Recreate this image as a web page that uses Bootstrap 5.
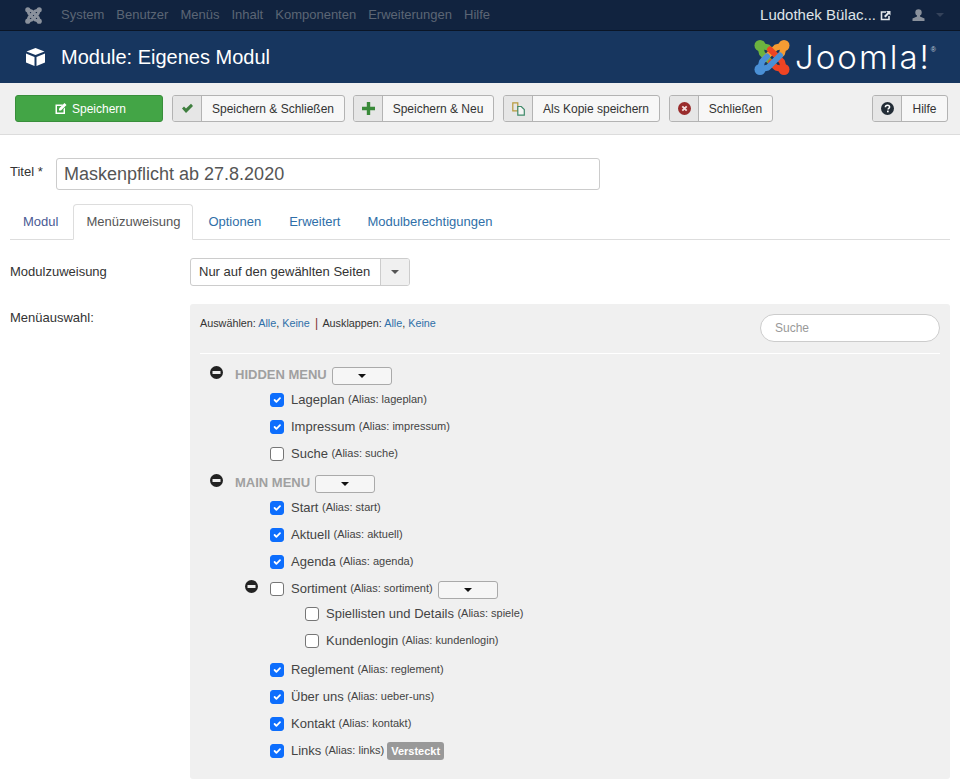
<!DOCTYPE html>
<html lang="de">
<head>
    <meta charset="UTF-8">
    <meta name="viewport" content="width=device-width, initial-scale=1.0">
    <title>Module: Eigenes Modul</title>
    <link href="https://cdn.jsdelivr.net/npm/bootstrap@5.3.0/dist/css/bootstrap.min.css" rel="stylesheet">
    <style>
        body { font-family: "Liberation Sans", Arial, sans-serif; font-size: 13px; color: #333; background: #fff; height: 781px; overflow: hidden; }
        a { text-decoration: none; color: #2f6fa8; }

        /* top bar */
        .topbar { height: 31px; background: #11233f; border-bottom: 1px solid #0a1526; padding: 0 16px 0 25px; }
        .topbar-logo { width: 17px; height: 17px; margin-right: 19px; }
        .topbar-link { color: #5c6675; font-size: 13px; margin-right: 12px; }
        .site-name { color: #dfe3e8; font-size: 15px; }
        .user-icon { margin-left: 21px; margin-right: 11px; }
        .user-caret { width: 0; height: 0; border: 4px solid transparent; border-top-color: #34425a; margin-top: 4px; }

        /* title bar */
        .titlebar { height: 52px; background: #17365f; padding: 0 24px 0 25px; }
        .page-title { color: #fff; font-size: 20px; font-weight: 400; margin: 0 0 0 15px; }
        .brand-word { color: #fff; font-family: "Inter", sans-serif; font-weight: 300; font-size: 33px; line-height: 1; margin-left: 5px; letter-spacing: 2px; }
        .brand-reg { color: #c9d1dc; font-size: 7px; align-self: flex-start; margin-top: 6px; }

        /* toolbar */
        .toolbar { height: 52px; background: #f0f0f0; border-bottom: 1px solid #dcdcdc; padding: 12px 12px 0 15px; }
        .tool-btn { height: 27px; display: flex; background: #f7f7f7; border: 1px solid #b3b3b3; border-radius: 3px; color: #333; font-size: 12px; padding: 0; align-items: stretch; margin-right: 9px; }
        .tool-btn:hover { background: #f7f7f7; border-color: #b3b3b3; }
        .tool-icon { width: 29px; background: #e6e6e6; border-right: 1px solid #b3b3b3; display: flex; align-items: center; justify-content: center; border-radius: 2px 0 0 2px; }
        .tool-label { display: flex; align-items: center; justify-content: center; flex: 1; }
        .btn-save { width: 148px; background: #43a546; border-color: #388e3b; color: #fff; align-items: center; justify-content: center; gap: 5px; padding-left: 2px; }
        .btn-save:hover { background: #43a546; border-color: #388e3b; color: #fff; }
        .w-saveclose { width: 173px; margin-right: 8px; }
        .w-savenew { width: 141px; }
        .w-copy { width: 157px; }
        .w-close { width: 104px; }
        .w-help { width: 76px; margin-right: 0; }

        /* form */
        .content-area { padding: 23px 10px 0; }
        .title-label { width: 46px; font-size: 13px; color: #333; margin-top: -4px; }
        .title-input { width: 544px; height: 32px; font-size: 18px; color: #555; padding: 0 7px; border: 1px solid #ccc; border-radius: 3px; }
        .tab-row { margin-top: 14px; border-bottom: 1px solid #ddd; height: 36px; }
        .tab-row .nav-link { height: 36px; padding: 0 12px; font-size: 13px; line-height: 34px; color: #2f6fa8; border-radius: 4px 4px 0 0; margin-right: 2px; }
        .tab-row .nav-link.active { color: #555; border-color: #ddd #ddd #fff; }
        .tab-row .nav-link.first-tab { color: #4a5a94; }
        .tab-row .nav-link.tight-tab { margin-right: 1px; }
        .field-label { width: 180px; font-size: 13px; color: #333; }
        .assign-row { margin-top: 18px; height: 28px; }
        .assign-select { width: 220px; height: 28px; border: 1px solid #ccc; border-radius: 3px; background: #fff; overflow: hidden; font-size: 13px; color: #333; }
        .assign-value { flex: 1; padding-left: 8px; }
        .assign-arrow { width: 29px; height: 100%; background: #f0f0f0; border-left: 1px solid #ccc; display: flex; align-items: center; justify-content: center; }
        .mini-caret { width: 0; height: 0; border: 4px solid transparent; border-top-color: #555; border-bottom: 0; }

        .menu-row { margin-top: 18px; }
        .menu-label { padding-top: 4px; }
        .menu-panel { width: 760px; height: 475px; background: #f0f0f0; border-radius: 3px; padding: 10px; }
        .panel-head { height: 39px; border-bottom: 1px solid #fff; font-size: 10.8px; color: #333; box-sizing: content-box; }
        .sep { color: #7a3030; margin: 0 2px; font-size: 12px; }
        .search-box { width: 180px; height: 28px; border: 1px solid #ccc; border-radius: 14px; font-size: 12px; padding: 0 14px; background: #fff; }
        .search-box::placeholder { color: #999; }

        .tree-group { height: 25px; padding-left: 10px; margin-top: 7px; }
        .tree-list + .tree-group { margin-top: 2px; }
        .tree-minus { width: 13px; height: 13px; flex: none; margin-top: -2px; }
        .group-name { color: #a0a0a0; font-weight: 700; font-size: 13px; margin-left: 12px; margin-top: 2px; }
        .caret-btn { width: 60px; height: 18px; background: #f6f6f6; border: 1px solid #aaa; border-radius: 3px; padding: 0; display: inline-flex; align-items: center; justify-content: center; margin-left: 5px; }
        .tree-group .caret-btn { margin-top: 5px; }
        .caret-btn span { width: 0; height: 0; border: 4px solid transparent; border-top-color: #111; border-bottom: 0; }
        .tree-item { height: 27px; padding-left: 70px; position: relative; }
        .tree-item.sub { padding-left: 105px; }
        .tree-item.parent { margin-bottom: -2px; }
        .tree-item .form-check-input { width: 14px; height: 14px; margin: 0 7px 0 0; flex: none; border-radius: 3px; border-color: #767676; }
        .tree-item .form-check-input:checked { border-color: #0d6efd; }
        .item-name { font-size: 13px; color: #444; }
        .item-alias { font-size: 11px; color: #444; margin-left: 3.5px; }
        .tree-minus.item-minus { position: absolute; left: 45px; top: 5px; margin: 0; }
        .parent .caret-btn { margin-top: 2px; }
        .gap-after { margin-bottom: 2px; }
        .hidden-tag { background: #999; color: #fff; font-size: 11px; font-weight: 700; padding: 2px 4px; border-radius: 3px; margin-left: 3px; line-height: 14px; }
    </style>
</head>
<body>
    <svg width="0" height="0" class="d-block">
        <defs>
            <g id="jhook">
                <path d="M6 6 8 14 20 26M6 6 14 8 19 13" fill="none" stroke-width="6" stroke-linejoin="round" stroke-linecap="round" stroke="currentColor"/>
                <circle cx="6" cy="6" r="5.5" fill="currentColor"/>
            </g>
        </defs>
    </svg>

    <!-- Top bar -->
    <div class="topbar d-flex align-items-center">
        <svg class="topbar-logo" viewBox="0 0 36 36" color="#8a919c">
            <use href="#jhook"/>
            <use href="#jhook" transform="rotate(90 18 18)"/>
            <use href="#jhook" transform="rotate(180 18 18)"/>
            <use href="#jhook" transform="rotate(270 18 18)"/>
        </svg>
        <a class="topbar-link" href="#">System</a>
        <a class="topbar-link" href="#">Benutzer</a>
        <a class="topbar-link" href="#">Menüs</a>
        <a class="topbar-link" href="#">Inhalt</a>
        <a class="topbar-link" href="#">Komponenten</a>
        <a class="topbar-link" href="#">Erweiterungen</a>
        <a class="topbar-link" href="#">Hilfe</a>
        <span class="site-name ms-auto">Ludothek Bülac...</span>
        <svg class="ms-1" width="11" height="11" viewBox="0 0 11 11"><path d="M6 2H1.5v7.5H9V6" fill="none" stroke="#e4e7eb" stroke-width="1.6"/><path d="M6 1h4.500v4.500L9 4 5.500 7.500 4 6l3.500-3.500z" fill="#e4e7eb"/></svg>
        <svg class="user-icon" width="13" height="13" viewBox="0 0 13 13"><circle cx="6.500" cy="3.500" r="3.200" fill="#8a919c"/><path d="M5 6h3v1.500l4.500 2V12H.5V9.500L5 7.500z" fill="#8a919c"/></svg>
        <span class="user-caret"></span>
    </div>

    <!-- Title bar -->
    <div class="titlebar d-flex align-items-center">
        <svg width="21" height="20" viewBox="0 0 21 20"><path d="M10.500 1 19.500 4.500 10.500 8 1.500 4.500z" fill="#fff"/><path d="M1 6.500 9.500 10v9L1 15.500z" fill="#fff"/><path d="M20 6.500 11.500 10v9l8.500-3.500z" fill="#fff"/></svg>
        <h1 class="page-title">Module: Eigenes Modul</h1>
        <div class="ms-auto d-flex align-items-center">
            <svg width="36" height="37" viewBox="0 0 36 36">
                <use href="#jhook" color="#6cb33f"/>
                <use href="#jhook" color="#f49c33" transform="rotate(90 18 18)"/>
                <use href="#jhook" color="#ee4423" transform="rotate(180 18 18)"/>
                <use href="#jhook" color="#4a90d6" transform="rotate(270 18 18)"/>
            </svg>
            <span class="brand-word">Joomla!</span>
            <span class="brand-reg">®</span>
        </div>
    </div>

    <!-- Toolbar -->
    <div class="toolbar d-flex">
        <button class="btn tool-btn btn-save">
            <svg width="13" height="13" viewBox="0 0 13 13"><path d="M1.500 2.500H9L7.500 4H3v6.500h6.500V7L11 5.500v6.500H1.500z" fill="#fff"/><path d="M5 6.500 10.500 1l2 2L7 8.500H5z" fill="#fff"/></svg>
            Speichern
        </button>
        <button class="btn tool-btn w-saveclose">
            <span class="tool-icon"><svg width="13" height="11" viewBox="0 0 13 11"><path d="M1 5.500 3 3.500 5 5.500 10 .8 12 3 5 10z" fill="#3f7f3f"/></svg></span>
            <span class="tool-label">Speichern &amp; Schließen</span>
        </button>
        <button class="btn tool-btn w-savenew">
            <span class="tool-icon"><svg width="13" height="13" viewBox="0 0 13 13"><path d="M4.800 0h3.400v4.800H13v3.400H8.200V13H4.800V8.200H0V4.800h4.800z" fill="#3a8a3a"/></svg></span>
            <span class="tool-label">Speichern &amp; Neu</span>
        </button>
        <button class="btn tool-btn w-copy">
            <span class="tool-icon"><svg width="13" height="14" viewBox="0 0 13 14"><path d="M.8.800h5v8h-5z" fill="none" stroke="#b79a3c" stroke-width="1.200"/><path d="M5.800 4.500h3.500l3 3v5.700H5.800z" fill="#f4f4f4" stroke="#3f8a6a" stroke-width="1.200"/></svg></span>
            <span class="tool-label">Als Kopie speichern</span>
        </button>
        <button class="btn tool-btn w-close">
            <span class="tool-icon"><svg width="13" height="13" viewBox="0 0 13 13"><circle cx="6.500" cy="6.500" r="6.500" fill="#992b2b"/><path d="M4.300 4.300 8.700 8.700M8.700 4.300 4.300 8.700" stroke="#f3dede" stroke-width="1.800"/></svg></span>
            <span class="tool-label">Schließen</span>
        </button>
        <button class="btn tool-btn w-help ms-auto">
            <span class="tool-icon"><svg width="13" height="13" viewBox="0 0 13 13"><circle cx="6.500" cy="6.500" r="6.500" fill="#222c36"/><path d="M4.400 5.200C4.400 3.900 5.300 3.200 6.500 3.200s2.100.7 2.100 1.800c0 1.400-1.500 1.300-1.500 2.500" fill="none" stroke="#fff" stroke-width="1.500"/><rect x="6" y="8.600" width="1.700" height="1.700" fill="#fff"/></svg></span>
            <span class="tool-label">Hilfe</span>
        </button>
    </div>

    <div class="content-area">
        <!-- Title -->
        <div class="d-flex align-items-center">
            <label class="title-label" for="jform_title">Titel *</label>
            <input id="jform_title" class="form-control title-input" type="text" value="Maskenpflicht ab 27.8.2020">
        </div>

        <!-- Tabs -->
        <ul class="nav nav-tabs tab-row">
            <li class="nav-item"><a class="nav-link first-tab" href="#">Modul</a></li>
            <li class="nav-item"><a class="nav-link active" href="#">Menüzuweisung</a></li>
            <li class="nav-item"><a class="nav-link" href="#">Optionen</a></li>
            <li class="nav-item"><a class="nav-link tight-tab" href="#">Erweitert</a></li>
            <li class="nav-item"><a class="nav-link" href="#">Modulberechtigungen</a></li>
        </ul>

        <!-- Assignment -->
        <div class="d-flex align-items-center assign-row">
            <div class="field-label">Modulzuweisung</div>
            <div class="assign-select d-flex align-items-center">
                <span class="assign-value">Nur auf den gewählten Seiten</span>
                <span class="assign-arrow"><span class="mini-caret"></span></span>
            </div>
        </div>

        <!-- Menu selection -->
        <div class="d-flex menu-row">
            <div class="field-label menu-label">Menüauswahl:</div>
            <div class="menu-panel">
                <div class="panel-head d-flex justify-content-between align-items-start">
                    <div>Auswählen: <a href="#">Alle</a>, <a href="#">Keine</a> <span class="sep">|</span> Ausklappen: <a href="#">Alle</a>, <a href="#">Keine</a></div>
                    <input class="form-control search-box" type="text" placeholder="Suche">
                </div>

                <div id="tree"></div>
            </div>
        </div>
    </div>

    <script>
        // Menu tree data
        const minusIcon = '<svg class="tree-minus" viewBox="0 0 13 13"><circle cx="6.5" cy="6.5" r="6.5" fill="#222"/><rect x="2.5" y="5" width="8" height="3" fill="#eee"/></svg>';
        const caretBtn = '<button type="button" class="caret-btn"><span></span></button>';

        const menus = [
            { name: 'HIDDEN MENU', items: [
                { name: 'Lageplan', alias: 'lageplan', on: true },
                { name: 'Impressum', alias: 'impressum', on: true },
                { name: 'Suche', alias: 'suche', on: false }
            ]},
            { name: 'MAIN MENU', items: [
                { name: 'Start', alias: 'start', on: true },
                { name: 'Aktuell', alias: 'aktuell', on: true },
                { name: 'Agenda', alias: 'agenda', on: true },
                { name: 'Sortiment', alias: 'sortiment', on: false, parent: true },
                { name: 'Spiellisten und Details', alias: 'spiele', on: false, sub: true },
                { name: 'Kundenlogin', alias: 'kundenlogin', on: false, sub: true, last: true },
                { name: 'Reglement', alias: 'reglement', on: true },
                { name: 'Über uns', alias: 'ueber-uns', on: true },
                { name: 'Kontakt', alias: 'kontakt', on: true },
                { name: 'Links', alias: 'links', on: true, hidden: true }
            ]}
        ];

        let html = '';
        menus.forEach(menu => {
            html += `<div class="tree-group d-flex align-items-center">${minusIcon}<span class="group-name">${menu.name}</span>${caretBtn}</div><div class="tree-list">`;
            menu.items.forEach(item => {
                html += `<div class="tree-item d-flex align-items-center ${item.sub ? 'sub' : ''} ${item.parent ? 'parent' : ''} ${item.last ? 'gap-after' : ''}">`;
                if (item.parent) html += minusIcon.replace('tree-minus', 'tree-minus item-minus');
                html += `<input class="form-check-input" type="checkbox" ${item.on ? 'checked' : ''}>`;
                html += `<span class="item-name">${item.name}</span><span class="item-alias">(Alias: ${item.alias})</span>`;
                if (item.parent) html += caretBtn;
                if (item.hidden) html += '<span class="hidden-tag">Versteckt</span>';
                html += '</div>';
            });
            html += '</div>';
        });
        document.getElementById('tree').innerHTML = html;
    </script>
    <script src="https://cdn.jsdelivr.net/npm/bootstrap@5.3.0/dist/js/bootstrap.bundle.min.js"></script>
</body>
</html>
